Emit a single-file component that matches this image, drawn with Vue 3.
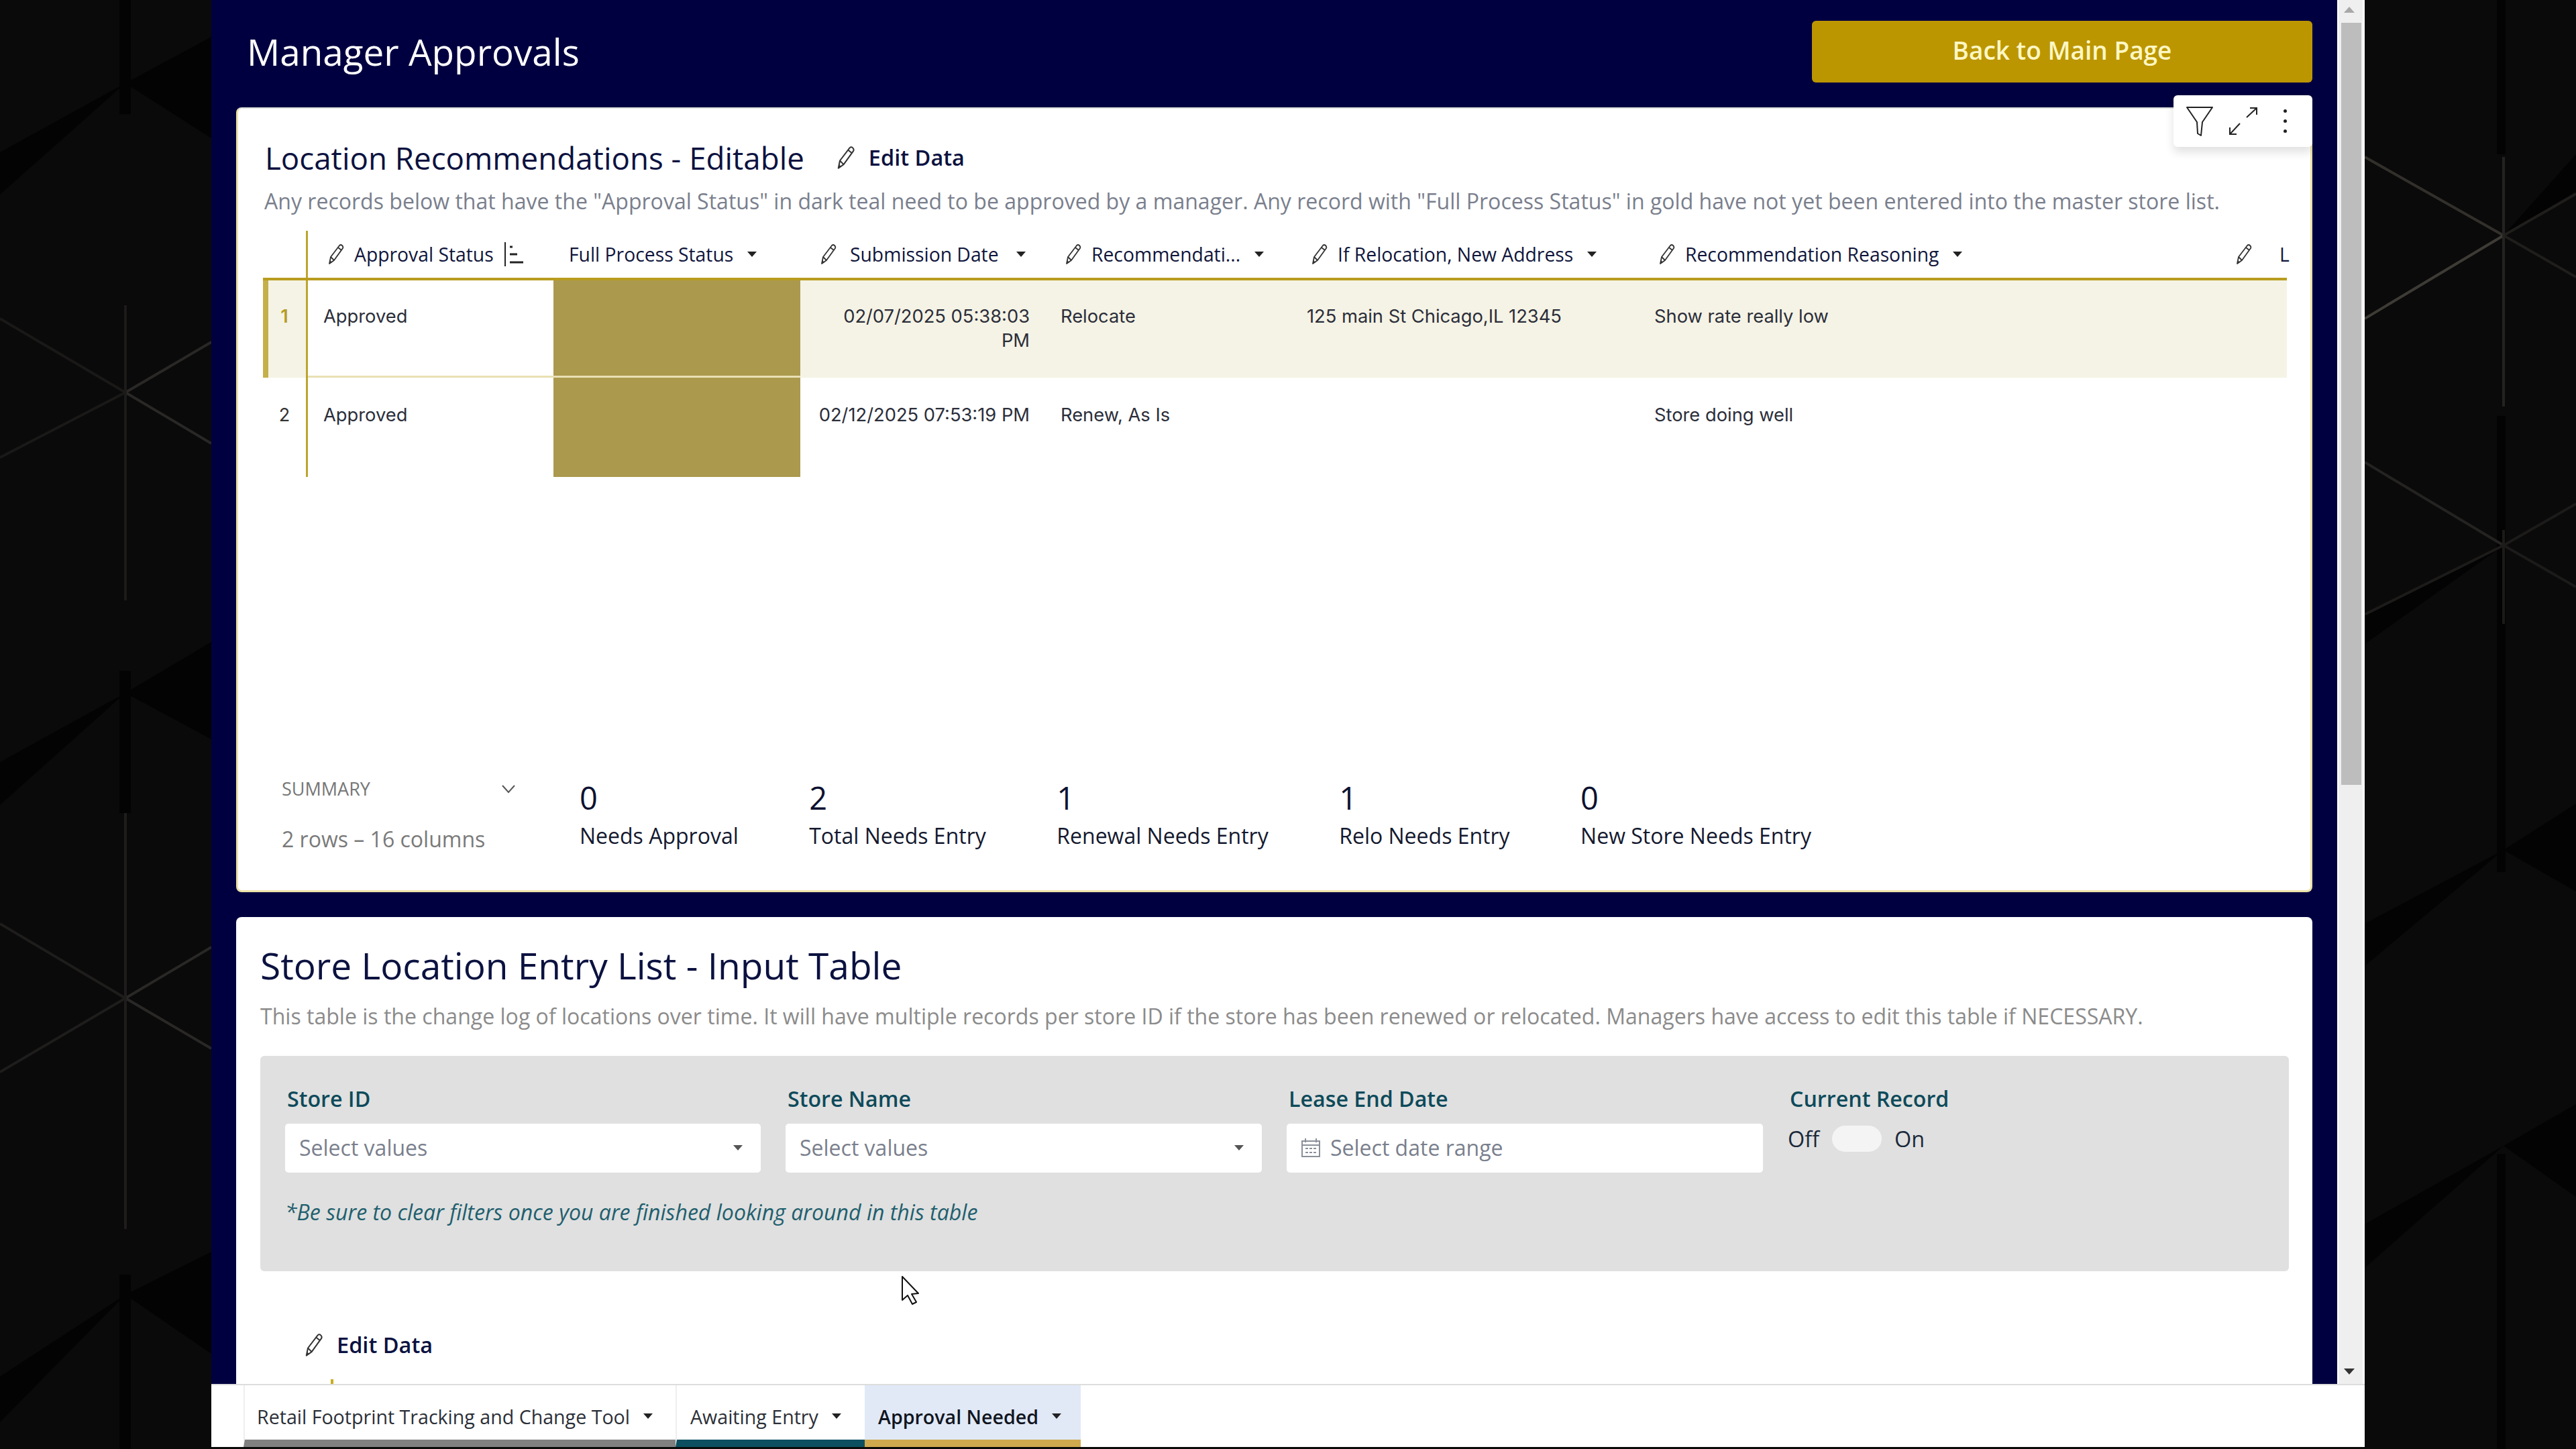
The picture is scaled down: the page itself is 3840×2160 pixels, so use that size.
<template>
  <div class="stage">
    <svg class="defs" width="0" height="0">
      <symbol id="pencil" viewBox="0 0 24 32">
        <path d="M2 30 L4 20 L17 3 Q19 1 21 3 Q23 5 22 7 L9 25 Z M15 6 L20 10 M4 20 L9 25" fill="none" stroke="currentColor" stroke-width="1.8" stroke-linejoin="round" />
        <path d="M2 30 L3 25 L6 28 Z" fill="currentColor" />
      </symbol>
    </svg>

    <svg class="side" width="315" height="2160" viewBox="0 0 315 2160">
      <polygon v-for="(w, i) in leftWedges" :key="i" :points="w" fill="#030303" />
      <line v-for="(l, i) in leftLines" :key="i" :x1="l[0]" :y1="l[1]" :x2="l[2]" :y2="l[3]" :stroke="l[4]" stroke-width="4" />
    </svg>

    <div class="frame">
      <div class="viewport">
        <div class="page">
          <header class="top">
            <h1>Manager Approvals</h1>
            <button class="back">Back to Main Page</button>
          </header>

          <section class="card first">
            <div class="tools">
              <svg width="40" height="46" viewBox="0 0 40 46"><path d="M1 2 H39 L24 24 L22 44 L17 41 L16 24 Z" fill="none" stroke="#222" stroke-width="2" stroke-linejoin="round" /></svg>
              <svg width="44" height="44" viewBox="0 0 44 44"><path d="M27 16 L42 2 M32 2 H42 V12 M17 25 L2 41 M2 31 V41 H12" fill="none" stroke="#222" stroke-width="2" /></svg>
              <div class="kebab"><i></i><i></i><i></i></div>
            </div>

            <div class="title-row">
              <h2>Location Recommendations - Editable</h2>
              <span class="edit"><svg class="pen big"><use href="#pencil" /></svg>Edit Data</span>
            </div>
            <p class="desc">Any records below that have the "Approval Status" in dark teal need to be approved by a manager. Any record with "Full Process Status" in gold have not yet been entered into the master store list.</p>

            <div class="table">
              <div class="row head">
                <div class="num"></div>
                <div v-for="col in columns" :key="col.label" class="th" :class="[col.cls, { plain: !col.pen }]">
                  <svg v-if="col.pen" class="pen"><use href="#pencil" /></svg>
                  <span>{{ col.label }}</span>
                  <svg v-if="col.sort" class="sort" width="30" height="36" viewBox="0 0 30 36">
                    <path d="M2 0 V36" stroke="#222" stroke-width="2" />
                    <path d="M9 7 H13 M9 18 H20 M9 30 H29" stroke="#222" stroke-width="3" />
                  </svg>
                  <i v-else-if="col.caret" class="caret"></i>
                </div>
              </div>
              <div v-for="(r, i) in rows" :key="i" class="row body" :class="{ active: i === 0 }">
                <div class="num">{{ i + 1 }}</div>
                <div class="td status">{{ r.status }}</div>
                <div class="td gold"></div>
                <div class="td date">{{ r.date }}</div>
                <div class="td">{{ r.rec }}</div>
                <div class="td">{{ r.addr }}</div>
                <div class="td">{{ r.reason }}</div>
                <div class="td"></div>
              </div>
            </div>

            <div class="summary">
              <div class="sum-left">
                <div class="sum-head">
                  <span>SUMMARY</span>
                  <svg width="22" height="14" viewBox="0 0 22 14"><path d="M2 2 L11 12 L20 2" fill="none" stroke="#555" stroke-width="2" /></svg>
                </div>
                <div class="sum-rows">2 rows – 16 columns</div>
              </div>
              <div v-for="s in stats" :key="s.label" class="stat">
                <div class="stat-num">{{ s.value }}</div>
                <div class="stat-label">{{ s.label }}</div>
              </div>
            </div>
          </section>

          <section class="card second">
            <h2 class="big-title">Store Location Entry List - Input Table</h2>
            <p class="desc light">This table is the change log of locations over time. It will have multiple records per store ID if the store has been renewed or relocated. Managers have access to edit this table if NECESSARY.</p>

            <div class="filters">
              <div class="filter-grid">
                <div class="label">Store ID</div>
                <div class="label">Store Name</div>
                <div class="label">Lease End Date</div>
                <div class="label">Current Record</div>
                <div class="input">Select values<i class="caret small"></i></div>
                <div class="input">Select values<i class="caret small"></i></div>
                <div class="input date-input">
                  <svg width="30" height="30" viewBox="0 0 30 30"><path d="M2 5 H28 V28 H2 Z M2 11 H28 M7 1 V7 M23 1 V7 M7 16 H11 M13 16 H17 M19 16 H23 M7 22 H11 M13 22 H17 M19 22 H23" fill="none" stroke="#8a8f99" stroke-width="2" /></svg>
                  Select date range
                </div>
                <div class="toggle-row">Off <span class="toggle"></span> On</div>
              </div>
              <div class="note">*Be sure to clear filters once you are finished looking around in this table</div>
            </div>

            <span class="edit lower"><svg class="pen big"><use href="#pencil" /></svg>Edit Data</span>
            <div class="stub"></div>
          </section>
        </div>

        <div class="scrollbar">
          <i class="arrow up"></i>
          <div class="thumb"></div>
          <i class="arrow down"></i>
        </div>
      </div>

      <nav class="tabs">
        <div v-for="t in tabs" :key="t.label" class="tab" :class="t.cls">
          {{ t.label }}<i class="caret tab-caret"></i>
        </div>
      </nav>
    </div>

    <svg class="side" width="315" height="2160" viewBox="3525 0 315 2160">
      <polygon v-for="(w, i) in rightWedges" :key="i" :points="w" fill="#030303" />
      <line v-for="(l, i) in rightLines" :key="i" :x1="l[0]" :y1="l[1]" :x2="l[2]" :y2="l[3]" :stroke="l[4]" stroke-width="4" />
    </svg>

    <svg class="cursor" width="30" height="44" viewBox="0 0 30 44">
      <path d="M2 1 V36 L10 29 L17 42 L23 39 L16 27 L26 26 Z" fill="#fff" stroke="#111" stroke-width="2" stroke-linejoin="round" />
    </svg>
  </div>
</template>

<script setup>
const columns = [
  { label: 'Approval Status', pen: true, sort: true },
  { label: 'Full Process Status', caret: true },
  { label: 'Submission Date', pen: true, caret: true, cls: 'wide' },
  { label: 'Recommendati...', pen: true, caret: true },
  { label: 'If Relocation, New Address', pen: true, caret: true },
  { label: 'Recommendation Reasoning', pen: true, caret: true },
  { label: 'L', pen: true, cls: 'last' }
];

const rows = [
  { status: 'Approved', date: '02/07/2025 05:38:03 PM', rec: 'Relocate', addr: '125 main St Chicago,IL 12345', reason: 'Show rate really low' },
  { status: 'Approved', date: '02/12/2025 07:53:19 PM', rec: 'Renew, As Is', addr: '', reason: 'Store doing well' }
];

const stats = [
  { value: 0, label: 'Needs Approval' },
  { value: 2, label: 'Total Needs Entry' },
  { value: 1, label: 'Renewal Needs Entry' },
  { value: 1, label: 'Relo Needs Entry' },
  { value: 0, label: 'New Store Needs Entry' }
];

const tabs = [
  { label: 'Retail Footprint Tracking and Change Tool', cls: 'gray' },
  { label: 'Awaiting Entry', cls: 'teal' },
  { label: 'Approval Needed', cls: 'current' }
];

const leftLines = [
  [187, 585, 315, 510, '#2a2826'], [187, 585, 315, 661, '#2a2826'],
  [187, 585, 0, 475, '#1a1918'], [187, 585, 0, 682, '#1a1918'],
  [187, 455, 187, 895, '#1c1b1a'],
  [187, 1488, 315, 1412, '#2a2826'], [187, 1488, 315, 1563, '#2a2826'],
  [187, 1488, 0, 1377, '#1e1d1c'], [187, 1488, 0, 1598, '#1e1d1c'],
  [187, 1212, 187, 1832, '#1e1d1c']
];
const leftWedges = [
  '187,124 315,55 315,206', '187,124 0,227 0,290',
  '187,1033 315,957 315,1102', '187,1033 0,1136 0,1200',
  '187,1930 315,1866 315,2018', '187,1930 0,2052 0,2120',
  '178,0 195,0 195,170 178,170', '178,1000 195,1000 195,1212 178,1212', '178,1900 195,1900 195,2160 178,2160'
];

const rightLines = [
  [3732, 351, 3525, 234, '#33302c'], [3732, 351, 3525, 475, '#3e3b36'],
  [3732, 351, 3840, 289, '#1f1e1c'], [3732, 351, 3840, 413, '#1f1e1c'],
  [3732, 234, 3732, 606, '#242321'],
  [3732, 813, 3525, 689, '#242321'], [3732, 813, 3525, 916, '#1c1b1a'],
  [3732, 813, 3840, 751, '#1c1b1a'], [3732, 813, 3840, 875, '#1c1b1a'],
  [3732, 790, 3732, 930, '#1c1b1a']
];
const rightWedges = [
  '3732,351 3840,285 3840,230', '3732,813 3525,916 3525,960',
  '3732,1267 3840,1198 3840,1329', '3732,1267 3525,1377 3525,1440',
  '3732,1708 3840,1646 3840,1784', '3732,1708 3525,1825 3525,1890',
  '3722,0 3735,0 3735,230 3722,230', '3722,620 3735,620 3735,1300 3722,1300', '3722,1720 3735,1720 3735,2160 3722,2160'
];
</script>

<style>
body { margin: 0; background: #0a0a0a; }
</style>

<style scoped>
.stage {
  position: relative;
  display: flex;
  width: 3840px;
  height: 2160px;
  overflow: hidden;
  background: #0a0a0a;
  font-family: "Open Sans", sans-serif;
  color: #111;
}
.defs { position: absolute; }
.side { flex: none; display: block; }
.frame {
  flex: none;
  width: 3210px;
  height: 2160px;
  display: flex;
  flex-direction: column;
}
.viewport { display: flex; height: 2063px; }
.page {
  flex: 1;
  min-width: 0;
  background: #000040;
  padding: 0 37px 0 37px;
  overflow: hidden;
}
.top {
  height: 160px;
  display: flex;
  justify-content: space-between;
  align-items: flex-start;
}
h1 {
  margin: 37px 0 0 16px;
  font-size: 54.8px;
  line-height: 80px;
  font-weight: 400;
  color: #fff;
}
.back {
  margin-top: 31px;
  width: 746px;
  height: 92px;
  padding: 0 0 5px;
  border: 0;
  border-radius: 6px;
  background: #bb9600;
  color: #fff7c4;
  font: 600 37px "Open Sans", sans-serif;
}
.card {
  position: relative;
  box-sizing: border-box;
  background: #fff;
  border-radius: 8px;
}
.first {
  height: 1170px;
  padding: 43px 0 0 39px;
  border: 3px solid #ece2a8;
  border-top: 2px solid #ddd;
}
.tools {
  position: absolute;
  top: -20px;
  right: -3px;
  width: 207px;
  height: 77px;
  box-sizing: border-box;
  padding-left: 19px;
  display: flex;
  align-items: center;
  background: #fff;
  border-radius: 6px;
  box-shadow: 0 8px 14px rgba(0, 0, 0, 0.12);
}
.tools svg + svg { margin-left: 23px; }
.kebab { display: flex; flex-direction: column; gap: 10px; margin-left: 38px; }
.kebab i { display: block; width: 5px; height: 5px; border-radius: 50%; background: #222; }
.title-row { display: flex; align-items: center; height: 60px; padding-left: 1px; }
h2 {
  margin: 0;
  font-size: 45.7px;
  line-height: 60px;
  font-weight: 400;
  color: #0b1240;
}
.edit {
  display: inline-flex;
  align-items: center;
  gap: 17px;
  margin-left: 45px;
  font-size: 32.5px;
  font-weight: 600;
  line-height: 44px;
  color: #0b1240;
}
.pen { width: 24px; height: 32px; flex: none; color: #333; }
.pen.big { width: 34px; height: 36px; }
.desc {
  margin: 13px 0 0;
  font-size: 32.05px;
  line-height: 44px;
  color: #7a7f8d;
  white-space: nowrap;
}
.table { margin: 22px 0 0 -2px; width: 3017px; height: 365px; }
.row {
  display: grid;
  grid-template-columns: 67px 366px 368px 365px 367px 518px 860px 106px;
}
.head { height: 74px; box-sizing: border-box; border-bottom: 4px solid #b89c1e; }
.num {
  box-sizing: border-box;
  border-right: 3px solid #bda52e;
  text-align: center;
  font-family: Inter, sans-serif;
  font-size: 27px;
  line-height: 36px;
  padding-top: 38px;
  color: #333;
}
.th {
  display: flex;
  align-items: center;
  gap: 15px;
  padding-left: 30px;
  font-size: 28.3px;
  font-weight: 500;
  color: #10163c;
  white-space: nowrap;
}
.th.plain { padding-left: 23px; }
.th.wide { gap: 20px; }
.th.last { gap: 41px; }
.sort { flex: none; margin-left: 0; }
.caret {
  display: inline-block;
  flex: none;
  width: 0;
  height: 0;
  margin-left: 6px;
  border-left: 7px solid transparent;
  border-right: 7px solid transparent;
  border-top: 8px solid #222;
}
.body { height: 145px; }
.body + .body { height: 148px; }
.td {
  padding: 38px 23px 0;
  font-family: Inter, sans-serif;
  font-size: 27.3px;
  line-height: 36px;
  color: #2b2e3a;
}
.date { text-align: right; }
.gold { background: #ab994e; padding: 0; }
.active { background: #f5f3e5; }
.active .td, .active .num { padding-top: 36px; }
.active .num { color: #b59c26; box-shadow: inset 8px 0 0 #c4b04a; font-weight: 600; }
.active .status { background: #fff; border-bottom: 3px solid #e9e0b4; }
.active .gold { border-bottom: 3px solid #e9e0b4; }
.summary {
  margin: 449px 0 0 26px;
  display: flex;
  gap: 105.5px;
}
.sum-left { width: 338.5px; flex: none; }
.sum-head {
  display: flex;
  justify-content: space-between;
  align-items: center;
  width: 349px;
  font-size: 27px;
  line-height: 36px;
  color: #777;
}
.sum-rows {
  margin-top: 37px;
  font-size: 32px;
  line-height: 40px;
  color: #7a7a7a;
  white-space: nowrap;
}
.stat { padding-top: 6px; }
.stat-num { font-size: 47px; line-height: 50px; color: #0c1230; }
.stat-label {
  margin-top: 12px;
  font-size: 32px;
  line-height: 40px;
  color: #14192f;
  white-space: nowrap;
}
.second {
  margin-top: 37px;
  height: 1000px;
  padding: 33px 0 0 36px;
}
.big-title { font-size: 55px; line-height: 78px; color: #0b1240; }
.light { margin-top: 15px; color: #8b8b8b; }
.filters {
  margin-top: 37px;
  box-sizing: border-box;
  width: 3024px;
  height: 321px;
  padding: 44px 0 0 37px;
  background: #e0e0e0;
  border-radius: 6px;
}
.filter-grid {
  display: grid;
  grid-template-columns: 709px 710px 710px auto;
  column-gap: 37px;
  row-gap: 17px;
}
.label {
  padding-left: 3px;
  font-size: 32.2px;
  line-height: 40px;
  font-weight: 600;
  color: #0e4a5a;
}
.input {
  box-sizing: border-box;
  height: 73px;
  padding: 0 21px 2px;
  display: flex;
  align-items: center;
  justify-content: space-between;
  background: #fff;
  border-radius: 5px;
  font-size: 32px;
  color: #7a7f8d;
}
.caret.small { border-top-color: #555; margin-right: 6px; }
.date-input { justify-content: flex-start; gap: 14px; }
.toggle-row {
  display: flex;
  align-items: flex-start;
  gap: 19px;
  padding-left: 0;
  font-size: 32.4px;
  line-height: 44px;
  color: #1a2a3a;
}
.toggle {
  display: block;
  margin-top: 3px;
  width: 74px;
  height: 39px;
  border-radius: 20px;
  background: #f4f4f4;
}
.note {
  margin: 37px 0 0;
  font-size: 32.1px;
  line-height: 44px;
  font-style: italic;
  color: #1f5f6e;
}
.lower { display: flex; margin: 88px 0 0 63px; }
.stub { width: 4px; height: 20px; margin: 29px 0 0 105px; background: #c9ae1f; }
.scrollbar {
  position: relative;
  flex: none;
  width: 41px;
  box-sizing: border-box;
  padding: 34px 5px 0 5px;
  background: #efefef;
  border-left: 2px solid #fff;
  border-right: 3px solid #fff;
}
.thumb { height: 1136px; width: 30px; margin-left: -1px; background: #bdbdbd; }
.arrow {
  position: absolute;
  left: 8px;
  width: 0;
  height: 0;
  border-left: 8px solid transparent;
  border-right: 8px solid transparent;
}
.up { top: 10px; border-bottom: 9px solid #a8a8a8; }
.down { bottom: 14px; border-top: 9px solid #333; }
.tabs {
  height: 94px;
  box-sizing: border-box;
  padding-left: 48px;
  display: flex;
  background: #fff;
  border-top: 2px solid #ddd;
}
.tab {
  box-sizing: border-box;
  display: flex;
  align-items: center;
  padding: 11px 0 0 18px;
  font-size: 28.6px;
  color: #2c3038;
  white-space: nowrap;
  border-bottom: 11px solid #808080;
}
.tab-caret { margin-left: 20px; }
.gray { width: 644px; border-left: 2px solid #eee; }
.teal { width: 282px; padding-left: 20px; border-left: 2px solid #eee; border-bottom-color: #0b4f60; }
.current {
  width: 322px;
  padding-left: 20px;
  background: #e1e9f7;
  border-bottom-color: #cfa94e;
  font-weight: 600;
  color: #10151f;
}
.cursor { position: absolute; left: 1343px; top: 1902px; }
</style>
